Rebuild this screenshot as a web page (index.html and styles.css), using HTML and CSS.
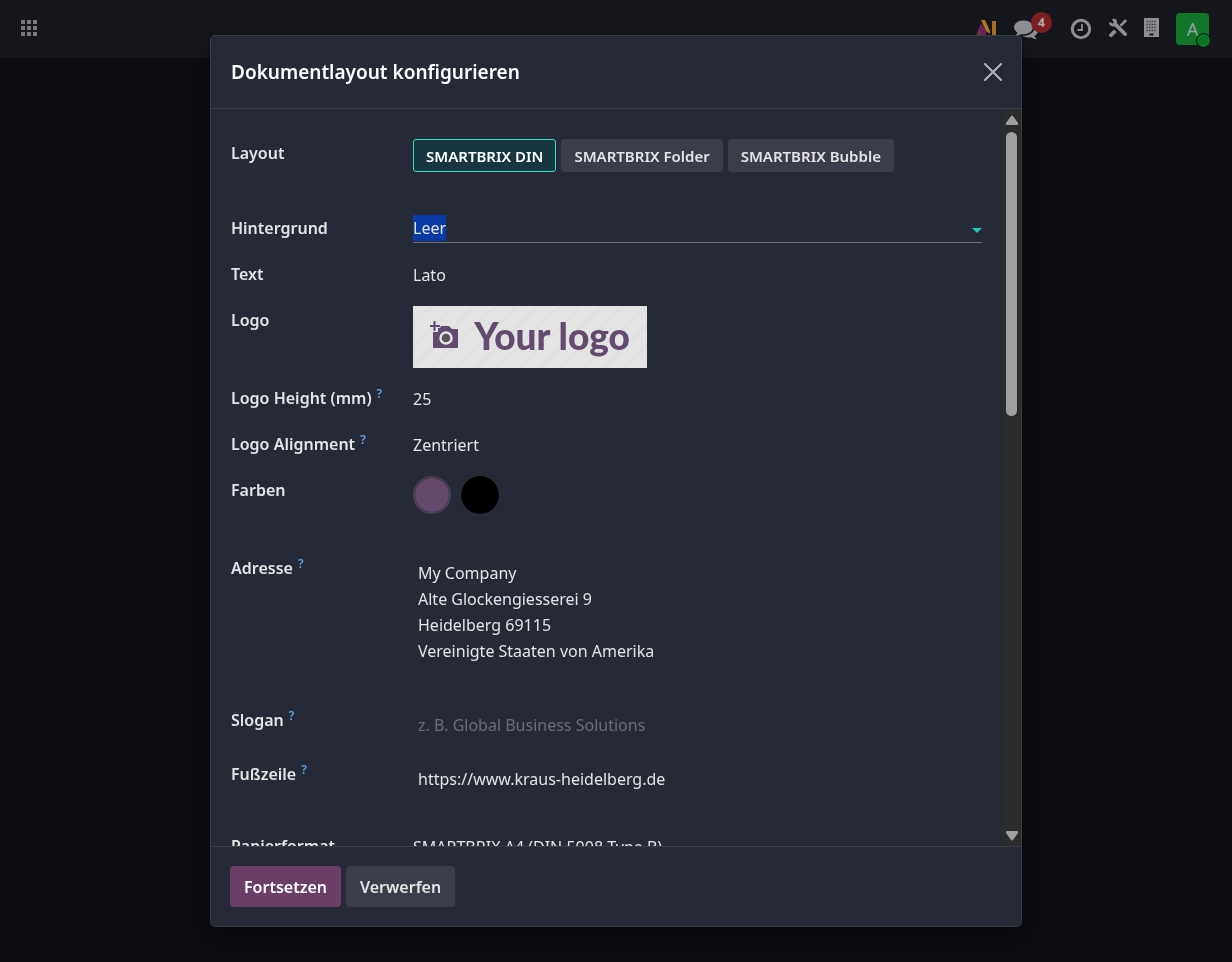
FILE: index.html
```html
<!DOCTYPE html>
<html lang="de">
<head>
    <meta charset="UTF-8">
    <meta name="viewport" content="width=device-width, initial-scale=1.0">
    <title>Dokumentlayout konfigurieren</title>
    <link rel="stylesheet" href="styles.css">
</head>
<body>

    <!-- Navbar -->
    <header class="navbar">
        <button class="nav-btn" aria-label="Apps">
            <svg width="18" height="18" viewBox="0 0 18 18" fill="#77787b">
                <path d="M0 0h4v4H0zM6 0h4v4H6zM12 0h4v4h-4zM0 6h4v4H0zM6 6h4v4H6zM12 6h4v4h-4zM0 12h4v4H0zM6 12h4v4H6zM12 12h4v4h-4z"/>
            </svg>
        </button>
        <div class="systray">
            <button class="nav-btn" aria-label="KI">
                <svg width="22" height="18" viewBox="0 0 22 18">
                    <path d="M0 15L5 3l6 9-3 6H0z" fill="#67265a"/>
                    <path d="M0 16l4-5 4 7H0z" fill="#7b343e"/>
                    <path d="M5 0h4l5 11v3l-4-3z" fill="#b47622"/>
                    <path d="M16 1h4v17h-4z" fill="#a76f22"/>
                </svg>
            </button>
            <button class="nav-btn chat" aria-label="Nachrichten">
                <svg width="24" height="24" viewBox="0 0 1792 1792" fill="#8d8e91">
                    <path d="M1408 768q0 139-94 257t-256.500 186.500-353.500 68.500q-86 0-176-16-124 88-278 128-36 9-86 16h-3q-11 0-20.500-8t-11.500-21q-1-3-1-6.500t.5-6.500 2-6l2.500-5 3.500-5.500 4-5 4.500-5 4-4.500q5-6 23-25t26-29.500 22.500-29 25-38.500 20.500-44q-124-72-195-177t-71-224q0-139 94-257t256.500-186.500 353.500-68.500 353.500 68.500 256.500 186.500 94 257zm384 256q0 120-71 224.500t-195 176.500q10 24 20.500 44t25 38.500 22.500 29 26 29.500 23 25q1 1 4 4.500t4.500 5 4 5 3.500 5.500l2.500 5 2 6 .5 6.500-1 6.500q-3 14-13 22t-22 7q-50-7-86-16-154-40-278-128-90 16-176 16-271 0-472-132 58 4 88 4 161 0 309-45t264-129q125-92 192-212t67-254q0-77-23-152 129 71 204 178t75 230z"/>
                </svg>
                <span class="badge">4</span>
            </button>
            <button class="nav-btn" aria-label="Aktivitäten">
                <svg width="22" height="22" viewBox="0 0 22 22" fill="none" stroke="#8d8e91">
                    <circle cx="11" cy="11" r="8.700" stroke-width="3"/>
                    <path d="M12 6v6H7.500" stroke-width="1.800"/>
                </svg>
            </button>
            <button class="nav-btn" aria-label="Werkzeuge">
                <svg width="20" height="22" viewBox="0 0 20 22" fill="#8d8e91">
                    <path d="M1 4.500l1.500-.3 2 1.500L6 4.200 4.300 2.300l.2-1.300c3-.7 5.200 1.500 4.500 4.300l9.600 9.600c1.400 1.800-1 4.200-2.700 2.700L6.400 8.200C3.500 9 .9 7.300 1 4.500z"/>
                    <path d="M11.500 7l4.700-5 1.300-.7 1.500 1.500-.7 1.300-5 4.700zM6.200 11.500l2.500 2.500-4.500 4.800c-1.600 1.400-4.200-1-2.700-2.700z"/>
                </svg>
            </button>
            <button class="nav-btn" aria-label="Unternehmen">
                <svg width="16" height="22" viewBox="0 0 16 22">
                    <path d="M0 0h15v19H0z" fill="#8d8e91"/>
                    <path d="M2.500 3.500h10M2.500 6.500h10M2.500 9.500h10M2.500 12.500h10" stroke="#3c3d42" stroke-width="1.500" stroke-dasharray="1.500 1"/>
                    <path d="M5.500 15.500h4v2h-4z" fill="#15161b"/>
                </svg>
            </button>
            <button class="avatar" aria-label="Benutzer">A<span class="status"></span></button>
        </div>
    </header>

    <!-- Dialog -->
    <div class="modal" role="dialog" aria-labelledby="modalTitle">
        <div class="modal-header">
            <h1 id="modalTitle">Dokumentlayout konfigurieren</h1>
            <button class="close-btn" aria-label="Schließen">
                <svg width="20" height="20" viewBox="0 0 20 20" stroke="#b4b6bc" stroke-width="2" stroke-linecap="round">
                    <path d="M2 2l16 16M18 2L2 18"/>
                </svg>
            </button>
        </div>

        <div class="modal-body">
            <form class="form" id="layoutForm">
                <div class="row row-layout">
                    <span class="label">Layout</span>
                    <div class="choices">
                        <button type="button" class="choice active">SMARTBRIX DIN</button>
                        <button type="button" class="choice">SMARTBRIX Folder</button>
                        <button type="button" class="choice">SMARTBRIX Bubble</button>
                    </div>
                </div>
                <div class="row">
                    <label class="label" for="background">Hintergrund</label>
                    <div class="combo">
                        <input type="text" id="background" role="combobox" value="Leer">
                        <svg width="10" height="10" viewBox="0 0 10 10"><path d="M0 5h10l-5 5z" fill="#1dc4b8"/></svg>
                    </div>
                </div>
                <div class="row">
                    <label class="label" for="font">Text</label>
                    <select id="font" class="field">
                        <option>Lato</option>
                    </select>
                </div>
                <div class="row">
                    <span class="label">Logo</span>
                    <button type="button" class="logo">
                        <svg width="32" height="30" viewBox="0 0 32 30">
                            <path d="M11 5h8l3 3h5q1 0 1 1v17q0 1-1 1H4q-1 0-1-1V11h5V7h2z" fill="#624b6e"/>
                            <circle cx="16" cy="17" r="5.500" fill="none" stroke="#e3e3e3" stroke-width="2.500"/>
                            <circle cx="16" cy="17" r="3.800" fill="#585459"/>
                            <path d="M4.500 0v10M0 5h10" stroke="#624b6e" stroke-width="2"/>
                        </svg>
                        <span>Your logo</span>
                    </button>
                </div>
                <div class="row">
                    <label class="label" for="logoHeight">Logo Height (mm)<sup>?</sup></label>
                    <input type="text" id="logoHeight" class="field" value="25">
                </div>
                <div class="row">
                    <label class="label" for="logoAlign">Logo Alignment<sup>?</sup></label>
                    <select id="logoAlign" class="field">
                        <option>Zentriert</option>
                    </select>
                </div>
                <div class="row row-colors">
                    <label class="label" for="primaryColor">Farben</label>
                    <div class="colors">
                        <input type="color" id="primaryColor" class="primary" value="#634a6b">
                        <input type="color" aria-label="Sekundärfarbe" value="#000000">
                    </div>
                </div>
                <div class="row">
                    <label class="label" for="address">Adresse<sup>?</sup></label>
                    <textarea id="address" class="area address">My Company
Alte Glockengiesserei 9
Heidelberg 69115
Vereinigte Staaten von Amerika</textarea>
                </div>
                <div class="row">
                    <label class="label" for="slogan">Slogan<sup>?</sup></label>
                    <textarea id="slogan" class="area slogan" placeholder="z. B. Global Business Solutions"></textarea>
                </div>
                <div class="row">
                    <label class="label" for="footerText">Fußzeile<sup>?</sup></label>
                    <textarea id="footerText" class="area footer-text">https://www.kraus-heidelberg.de</textarea>
                </div>
                <div class="row">
                    <label class="label" for="paper">Papierformat</label>
                    <select id="paper" class="field">
                        <option>SMARTBRIX A4 (DIN 5008 Type B)</option>
                    </select>
                </div>
            </form>
            <div class="scrollbar">
                <svg width="14" height="10" viewBox="0 0 14 10"><path d="M6 1q1-1 2 0l5 7q.5 2-1 2H2q-1.500 0-1-2z" fill="#9f9f9f"/></svg>
                <div class="track"><div class="thumb"></div></div>
                <svg width="14" height="10" viewBox="0 0 14 10"><path d="M6 9q1 1 2 0l5-7q.5-2-1-2H2Q.5 0 1 2z" fill="#9f9f9f"/></svg>
            </div>
        </div>

        <div class="modal-footer">
            <button type="submit" form="layoutForm" class="btn btn-primary">Fortsetzen</button>
            <button type="button" class="btn">Verwerfen</button>
        </div>
    </div>

    <script>
        const background = document.getElementById("background");
        background.focus();
        background.select();
    </script>

</body>
</html>
```
FILE: styles.css
```css
* {
    box-sizing: border-box;
}
body {
    margin: 0;
    min-height: 100vh;
    background-color: #0c0d11;
    color: #e4e4e6;
    font-family: "Noto Sans", "Open Sans", sans-serif;
    font-size: 16px;
    line-height: 26px;
}
button, input, select, textarea {
    font: inherit;
    color: inherit;
    margin: 0;
    padding: 0;
    border: none;
    border-radius: 0;
    background: none;
    outline: none;
}
button {
    cursor: pointer;
}
svg {
    display: block;
    flex-shrink: 0;
}
/* Navbar */
.navbar {
    display: flex;
    align-items: center;
    justify-content: space-between;
    height: 58px;
    padding: 0 23px 0 21px;
    background-color: #15161b;
}
.systray {
    display: flex;
    align-items: center;
    gap: 16px;
}
.chat {
    position: relative;
    width: 40px;
}
.badge {
    position: absolute;
    top: -5px;
    right: 2px;
    width: 21px;
    height: 21px;
    border-radius: 50%;
    background-color: #7d1f21;
    color: #b5a9aa;
    font-size: 12px;
    font-weight: 700;
    line-height: 21px;
}
.avatar {
    position: relative;
    width: 33px;
    height: 32px;
    border-radius: 4px;
    background-color: #11752a;
    color: #8fa596;
    font-size: 18px;
    line-height: 32px;
}
.status {
    position: absolute;
    right: -2px;
    bottom: -3px;
    width: 15px;
    height: 15px;
    border: 1px solid #08120b;
    border-radius: 50%;
    background-color: #0c7427;
}
/* Dialog */
.modal {
    position: fixed;
    inset: 35px 0;
    display: flex;
    flex-direction: column;
    width: 100%;
    max-width: 812px;
    margin: 0 auto;
    border: 1px solid #3a3d46;
    border-radius: 5px;
    background-color: #262a36;
    box-shadow: 0 8px 16px rgba(0, 0, 0, 0.3);
    overflow: hidden;
}
.modal-header {
    display: flex;
    align-items: center;
    justify-content: space-between;
    height: 73px;
    padding: 0 18px 0 20px;
    border-bottom: 1px solid #3c3f49;
}
h1 {
    margin: 0;
    color: #fff;
    font-size: 19px;
    font-weight: 600;
}
.modal-body {
    display: flex;
    flex: 1;
    min-height: 0;
}
.form {
    flex: 1;
    display: flex;
    flex-direction: column;
    gap: 16px;
    padding: 30px 21px 30px 20px;
    overflow-y: auto;
    scrollbar-width: none;
}
.row {
    display: grid;
    grid-template-columns: 182px 1fr;
    align-items: start;
    flex-shrink: 0;
    min-height: 30px;
}
.row-layout {
    min-height: 59px;
}
.row-colors {
    min-height: 62px;
}
.label {
    padding-top: 1px;
    font-weight: 600;
}
sup {
    margin-left: 5px;
    color: #5ba4e6;
    font-size: 12px;
    line-height: 0;
}
.choices {
    display: flex;
    gap: 5px;
}
.choice {
    height: 33px;
    padding: 0 12px;
    border: 1px solid #3b3e4a;
    border-radius: 3px;
    background-color: #3b3e4a;
    font-size: 15px;
    font-weight: 600;
}
.choice.active {
    border-color: #2fe0c4;
    background-color: #17363f;
    color: #fff;
}
.combo {
    display: flex;
    align-items: center;
    height: 29px;
    border-bottom: 1px solid #6b6e77;
}
.combo input {
    flex: 1;
    height: 26px;
}
.combo input::selection {
    background-color: rgba(8, 59, 168, 0.99);
    color: #e4e4e6;
}
.field {
    width: 100%;
    height: 30px;
    appearance: none;
}
.logo {
    display: flex;
    align-items: center;
    justify-content: center;
    gap: 12px;
    width: 234px;
    height: 62px;
    padding-bottom: 3px;
    background: repeating-linear-gradient(135deg, #e4e4e4 0 12px, #e0e0e0 12px 15px);
    color: #624b6e;
    font-family: Lato, sans-serif;
    font-size: 37px;
    font-weight: 900;
}
.colors {
    display: flex;
    gap: 10px;
}
.colors input {
    width: 38px;
    height: 38px;
    border-radius: 50%;
    overflow: hidden;
    appearance: none;
}
.colors .primary {
    border: 2px solid #4b3f55;
}
.colors input::-webkit-color-swatch-wrapper {
    padding: 0;
}
.colors input::-webkit-color-swatch {
    border: none;
    border-radius: 50%;
}
.area {
    display: block;
    width: 100%;
    padding: 6px 5px;
    resize: none;
    overflow: hidden;
}
.area::placeholder {
    color: #6a6d76;
}
.address {
    height: 136px;
}
.slogan {
    height: 38px;
}
.footer-text {
    height: 56px;
}
/* Scrollbar */
.scrollbar {
    display: flex;
    flex-direction: column;
    align-items: center;
    gap: 7px;
    width: 18px;
    padding: 6px 1px 5px 0;
    background-color: #2c2c2c;
}
.track {
    flex: 1;
    width: 11px;
}
.thumb {
    height: 41%;
    border-radius: 6px;
    background-color: #9f9f9f;
}
.modal-footer {
    display: flex;
    align-items: center;
    gap: 5px;
    height: 80px;
    padding: 0 19px;
    border-top: 1px solid #3c3f49;
}
.btn {
    height: 41px;
    padding: 0 14px;
    border-radius: 4px;
    background-color: #3b3e4a;
    font-weight: 600;
}
.btn-primary {
    background-color: #6b3e66;
    color: #fff;
}
```
